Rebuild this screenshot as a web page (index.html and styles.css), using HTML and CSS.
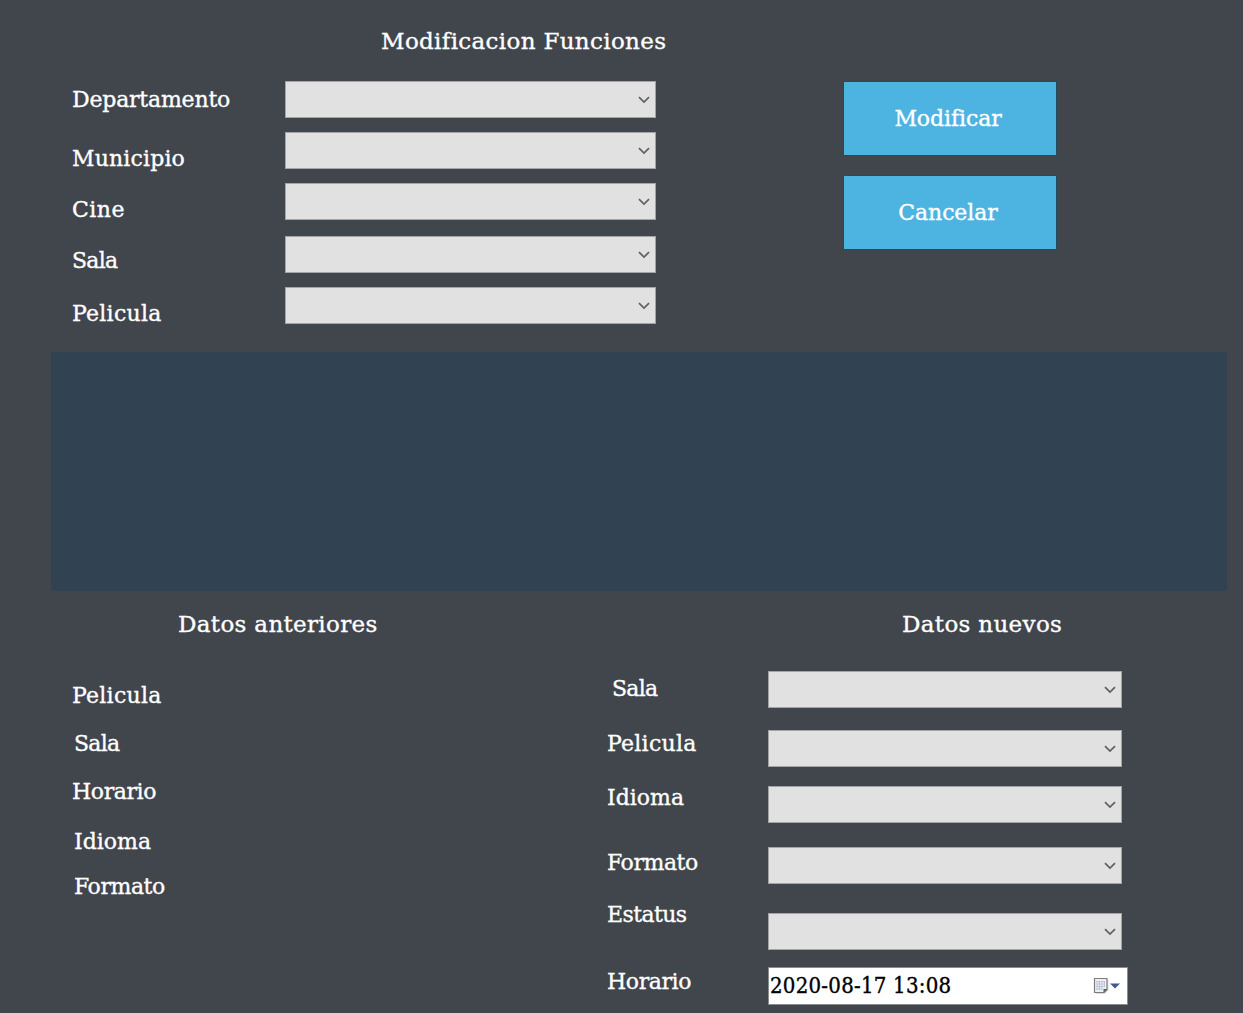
FILE: index.html
```html
<!DOCTYPE html>
<html lang="es">
<head>
<meta charset="utf-8">
<title>Modificacion Funciones</title>
<link rel="stylesheet" href="styles.css">
</head>
<body>
<svg class="defs" width="0" height="0"><symbol id="chevron" viewBox="0 0 12 8"><path d="M1 1.200 L6 6 L11 1.200" fill="none" stroke="#606060" stroke-width="1.700"/></symbol></svg>
<main class="window">
  <h1 class="title">Modificacion Funciones</h1>
  <section class="filters">
    <div class="labels filter-labels">
      <span class="departamento">Departamento</span>
      <span class="municipio">Municipio</span>
      <span class="cine">Cine</span>
      <span class="sala">Sala</span>
      <span class="pelicula">Pelicula</span>
    </div>
    <div class="fields filter-fields">
      <div class="combo"><svg><use href="#chevron"/></svg></div>
      <div class="combo"><svg><use href="#chevron"/></svg></div>
      <div class="combo"><svg><use href="#chevron"/></svg></div>
      <div class="combo"><svg><use href="#chevron"/></svg></div>
      <div class="combo"><svg><use href="#chevron"/></svg></div>
    </div>
    <div class="actions">
      <button class="modificar">Modificar</button>
      <button class="cancelar">Cancelar</button>
    </div>
  </section>
  <section class="grid-panel"></section>
  <section class="details">
    <div class="previous">
      <h2>Datos anteriores</h2>
      <div class="labels previous-labels">
        <span class="pelicula">Pelicula</span>
        <span class="sala indent">Sala</span>
        <span class="horario">Horario</span>
        <span class="idioma indent">Idioma</span>
        <span class="formato indent">Formato</span>
      </div>
    </div>
    <div class="new">
      <h2>Datos nuevos</h2>
      <div class="new-form">
        <div class="labels new-labels">
          <span class="sala">Sala</span>
          <span class="pelicula">Pelicula</span>
          <span class="idioma">Idioma</span>
          <span class="formato">Formato</span>
          <span class="estatus">Estatus</span>
          <span class="horario">Horario</span>
        </div>
        <div class="fields new-fields">
          <div class="combo"><svg><use href="#chevron"/></svg></div>
          <div class="combo"><svg><use href="#chevron"/></svg></div>
          <div class="combo"><svg><use href="#chevron"/></svg></div>
          <div class="combo"><svg><use href="#chevron"/></svg></div>
          <div class="combo"><svg><use href="#chevron"/></svg></div>
          <div class="date"><span>2020-08-17 13:08</span>
            <svg width="28" height="18" viewBox="0 0 28 18">
              <path d="M3 3h12.500v10.500l-3.500 3.500H3z" fill="#bbb" opacity=".5"/>
              <path d="M1.500 1.500h12.500v11l-3 3h-9.500z" fill="#eef0f5" stroke="#817b79" stroke-width="1.200"/>
              <path d="M3.500 4.500h8.500M3.500 7h8.500M3.500 9.500h8.500M3.500 12h6M4 4v9M6.500 4v9M9 4v9M11.500 4v6" stroke="#b4bdcf" stroke-width=".8" fill="none"/>
              <path d="M10.500 16v-4h4z" fill="#625f61"/>
              <path d="M17 6.500h10l-5 5z" fill="#435994"/>
            </svg>
          </div>
        </div>
      </div>
    </div>
  </section>
</main>
</body>
</html>
```
FILE: styles.css
```css
* { box-sizing: border-box; }
body { margin: 0; background: #41454c; color: #fff; font: 22px/24px Rockwell, "DejaVu Serif", serif; overflow: hidden; -webkit-text-stroke: .35px; }
.defs { display: block; }
.window { width: 1243px; height: 1013px; }
h1, h2 { margin: 0; font-weight: 400; font-size: 23px; line-height: 24px; white-space: nowrap; letter-spacing: .33px; }
.title { height: 81px; padding: 29px 0 0 381px; }
.filters { display: flex; height: 271px; padding-left: 72px; }
.labels { display: flex; flex-direction: column; white-space: nowrap; }
.labels span { height: 24px; }
.departamento { letter-spacing: -.2px; }
.municipio { letter-spacing: .15px; }
.cine { letter-spacing: .5px; }
.sala { letter-spacing: -.7px; }
.pelicula { letter-spacing: .25px; }
.horario { letter-spacing: -.4px; }
.formato { letter-spacing: -.45px; }
.estatus { letter-spacing: -.6px; }
.filter-labels { width: 213px; padding-top: 7px; }
.filter-labels .municipio { margin-top: 35px; }
.filter-labels .cine { margin-top: 27px; }
.filter-labels .sala { margin-top: 27px; }
.filter-labels .pelicula { margin-top: 29px; }
.fields { display: flex; flex-direction: column; }
.combo { display: flex; align-items: center; justify-content: flex-end; height: 37px; padding-right: 5px; background: #e1e1e1; border: 1px solid #a3a4a6; }
.combo svg { width: 12px; height: 8px; }
.filter-fields { width: 371px; }
.filter-fields .combo + .combo { margin-top: 14px; }
.filter-fields .combo:nth-child(4) { margin-top: 16px; }
.actions { display: flex; flex-direction: column; gap: 19px; width: 214px; margin-left: 187px; }
button { height: 75px; padding: 1px 4px 0 0; border: 1px solid #214d62; background: #4db4e2; color: #fff; font: inherit; letter-spacing: -.1px; }
.grid-panel { width: 1176px; height: 239px; margin-left: 51px; background: #314252; }
.details { display: flex; padding: 21px 0 0 72px; }
.previous { width: 535px; }
.previous h2 { padding-left: 106px; }
.previous-labels { padding-top: 48px; }
.previous-labels .sala { margin-top: 24px; }
.previous-labels .horario { margin-top: 24px; }
.previous-labels .idioma { margin-top: 26px; }
.previous-labels .formato { margin-top: 21px; }
.previous-labels .indent { padding-left: 2px; }
.new h2 { padding-left: 295px; }
.new-form { display: flex; padding-top: 35px; }
.new-labels { width: 161px; padding-top: 6px; }
.new-labels .sala { padding-left: 5px; }
.new-labels .pelicula { margin-top: 31px; }
.new-labels .idioma { margin-top: 30px; }
.new-labels .formato { margin-top: 41px; }
.new-labels .estatus { margin-top: 28px; }
.new-labels .horario { margin-top: 43px; }
.new-fields { width: 360px; }
.new-fields .combo { width: 354px; }
.new-fields .combo:nth-child(2) { margin-top: 22px; }
.new-fields .combo:nth-child(3) { margin-top: 19px; }
.new-fields .combo:nth-child(4) { margin-top: 24px; }
.new-fields .combo:nth-child(5) { margin-top: 29px; }
.date { display: flex; align-items: center; justify-content: space-between; height: 38px; margin-top: 17px; padding: 0 6px 0 1px; background: #fff; border: 1px solid #8b8c8e; color: #000; font-family: Rockwell, "DejaVu Serif Condensed", "DejaVu Serif", serif; letter-spacing: .25px; white-space: nowrap; }
```
